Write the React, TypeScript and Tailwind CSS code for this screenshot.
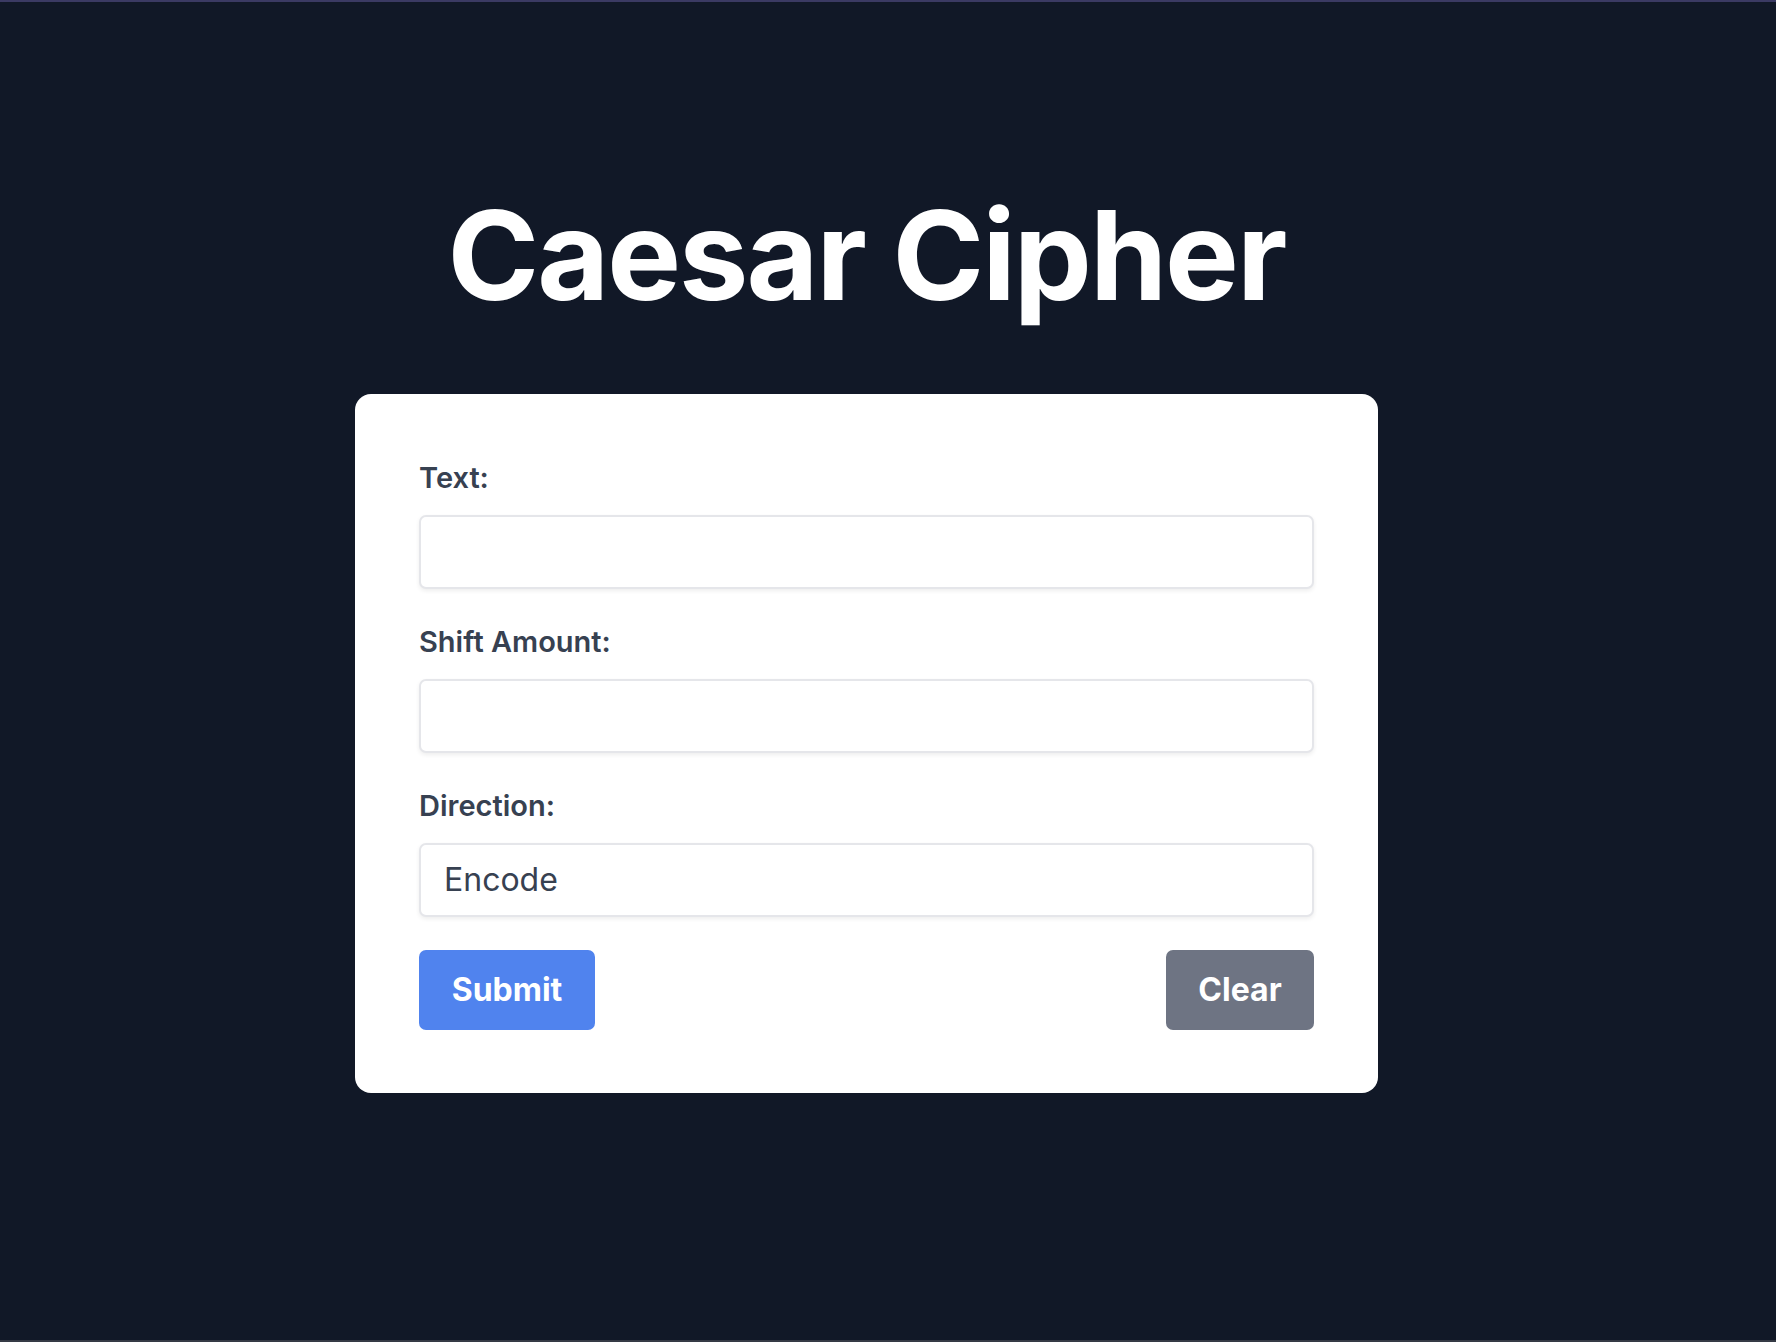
import { useState } from "react";

const Field = ({
  label,
  children,
}: {
  label: string;
  children: React.ReactNode;
}) => (
  <div className="flex flex-col">
    <label className="text-[29px] leading-[37px] font-semibold text-[#374151] mb-[19px]">
      {label}
    </label>
    {children}
  </div>
);

const inputCls =
  "h-[74px] w-full rounded-[7px] border-2 border-[#e5e6ea] bg-white px-[23px] text-[32px] text-[#374151] shadow-[0_2px_4px_rgba(0,0,0,0.07)] outline-none";

const App = () => {
  const [text, setText] = useState("");
  const [shift, setShift] = useState("");
  const [direction, setDirection] = useState("encode");

  return (
    <div className="min-h-[1342px] w-full bg-[#111827] border-t-2 border-t-[#3b3a63] border-b-2 border-b-[#353a45] font-['Inter',sans-serif]">
      <div className="w-[1733px] flex flex-col items-center pt-[191px]">
        {/* titre */}
        <h1 className="text-[124px] leading-[124px] font-bold text-white tracking-[-2px]">
          Caesar Cipher
        </h1>

        {/* carte formulaire */}
        <div className="mt-[77px] w-[1023px] rounded-[16px] bg-white px-[64px] pt-[65px] pb-[63px] flex flex-col gap-[34px]">
          <Field label="Text:">
            <input
              className={inputCls}
              value={text}
              onChange={(e) => setText(e.target.value)}
            />
          </Field>
          <Field label="Shift Amount:">
            <input
              type="text"
              className={inputCls}
              value={shift}
              onChange={(e) => setShift(e.target.value)}
            />
          </Field>
          <Field label="Direction:">
            <select
              className={inputCls + " appearance-none"}
              value={direction}
              onChange={(e) => setDirection(e.target.value)}
            >
              <option value="encode">Encode</option>
              <option value="decode">Decode</option>
            </select>
          </Field>

          <div className="flex justify-between -mt-[1px]">
            <button className="h-[80px] w-[176px] rounded-[7px] bg-[#5083ee] text-white text-[32px] font-bold">
              Submit
            </button>
            <button className="h-[80px] w-[148px] rounded-[7px] bg-[#6e7483] text-white text-[32px] font-bold">
              Clear
            </button>
          </div>
        </div>
      </div>
    </div>
  );
};

export default App;
